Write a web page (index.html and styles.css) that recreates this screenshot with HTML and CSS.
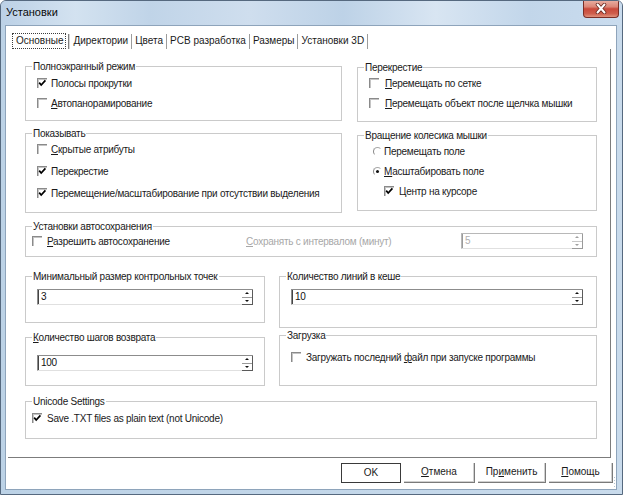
FILE: index.html
```html
<!DOCTYPE html>
<html>
<head>
<meta charset="utf-8">
<title>Установки</title>
<link rel="stylesheet" href="styles.css">
</head>
<body>
<div class="window">
  <div class="titlebar">
    <span class="title">Установки</span>
    <span class="close"><svg width="14" height="11" viewBox="0 0 14 11"><path d="M3.5 1.5 L10.5 9.5 M10.5 1.5 L3.5 9.5" stroke="#6a2a22" stroke-width="3.6" stroke-linecap="round"/><path d="M3.5 1.5 L10.5 9.5 M10.5 1.5 L3.5 9.5" stroke="#ffffff" stroke-width="2" stroke-linecap="round"/></svg></span>
  </div>
  <div class="frame">
    <div class="client">
      <div class="tabs">
        <span class="tab"><span class="focus">Основные</span></span>
        <span class="sep double"></span>
        <span class="tab">Директории</span><span class="sep"></span>
        <span class="tab">Цвета</span><span class="sep"></span>
        <span class="tab">PCB разработка</span><span class="sep"></span>
        <span class="tab">Размеры</span><span class="sep"></span>
        <span class="tab">Установки 3D</span><span class="sep"></span>
      </div>
      <div class="page">
        <div class="row row1">
          <div class="col col-left">
            <div class="group g1">
              <div class="glabel">Полноэкранный режим</div>
              <div class="gbody pl12">
                <div class="item h20"><span class="cb on"><svg width="10" height="10" viewBox="0 0 10 10"><path d="M2.2 4.6 L4.2 7 L8.4 2.4" fill="none" stroke="#000" stroke-width="1.7"/></svg></span>Полосы прокрутки</div>
                <div class="item h20"><span class="cb"></span><span><u>А</u>втопанорамирование</span></div>
              </div>
            </div>
            <div class="group g2">
              <div class="glabel">Показывать</div>
              <div class="gbody pl12 up2">
                <div class="item h22"><span class="cb"></span><span><u>С</u>крытые атрибуты</span></div>
                <div class="item h22"><span class="cb on"><svg width="10" height="10" viewBox="0 0 10 10"><path d="M2.2 4.6 L4.2 7 L8.4 2.4" fill="none" stroke="#000" stroke-width="1.7"/></svg></span>Перекрестие</div>
                <div class="item h22"><span class="cb on"><svg width="10" height="10" viewBox="0 0 10 10"><path d="M2.2 4.6 L4.2 7 L8.4 2.4" fill="none" stroke="#000" stroke-width="1.7"/></svg></span>Перемещение/масштабирование при отсутствии выделения</div>
              </div>
            </div>
          </div>
          <div class="col col-right">
            <div class="group g3">
              <div class="glabel">Перекрестие</div>
              <div class="gbody pl12 up1">
                <div class="item h20 wide"><span class="cb"></span><span><u>П</u>еремещать по сетке</span></div>
                <div class="item h20 wide"><span class="cb"></span><span><u>П</u>еремещать объект после щелчка мышки</span></div>
              </div>
            </div>
            <div class="group g4">
              <div class="glabel">Вращение колесика мышки</div>
              <div class="gbody pl16 up1">
                <div class="item h20"><span class="rb"></span>Перемещать поле</div>
                <div class="item h20"><span class="rb on"></span><span><u>М</u>асштабировать поле</span></div>
                <div class="item h20 sub"><span class="cb on"><svg width="10" height="10" viewBox="0 0 10 10"><path d="M2.2 4.6 L4.2 7 L8.4 2.4" fill="none" stroke="#000" stroke-width="1.7"/></svg></span>Центр на курсоре</div>
              </div>
            </div>
          </div>
        </div>

        <div class="group g5">
          <div class="glabel">Установки автосохранения</div>
          <div class="gbody autosave">
            <div class="item h16 mid"><span class="cb"></span><span><u>Р</u>азрешить автосохранение</span></div>
            <div class="item h16 disabled"><span><u>С</u>охранять с интервалом (минут)</span></div>
            <div class="edit disabled"><span class="val">5</span><span class="spin"><span><i class="up"></i></span><span><i class="down"></i></span></span></div>
          </div>
        </div>

        <div class="row row3">
          <div class="group g6">
            <div class="glabel">Минимальный размер контрольных точек</div>
            <div class="gbody ed">
              <div class="edit"><span class="val">3</span><span class="spin"><span><i class="up"></i></span><span><i class="down"></i></span></span></div>
            </div>
          </div>
          <div class="group g7">
            <div class="glabel">Количество линий в кеше</div>
            <div class="gbody ed ed-r">
              <div class="edit"><span class="val">10</span><span class="spin"><span><i class="up"></i></span><span><i class="down"></i></span></span></div>
            </div>
          </div>
        </div>

        <div class="row row4">
          <div class="group g8">
            <div class="glabel"><u>К</u>оличество шагов возврата</div>
            <div class="gbody ed ed-low">
              <div class="edit"><span class="val">100</span><span class="spin"><span><i class="up"></i></span><span><i class="down"></i></span></span></div>
            </div>
          </div>
          <div class="group g9">
            <div class="glabel">Загрузка</div>
            <div class="gbody pl12 load">
              <div class="item h16 mid"><span class="cb"></span><span>Загружать последний <u>ф</u>айл при запуске программы</span></div>
            </div>
          </div>
        </div>

        <div class="group g10">
          <div class="glabel">Unicode Settings</div>
          <div class="gbody uni">
            <div class="item h16 mid"><span class="cb on"><svg width="10" height="10" viewBox="0 0 10 10"><path d="M2.2 4.6 L4.2 7 L8.4 2.4" fill="none" stroke="#000" stroke-width="1.7"/></svg></span>Save .TXT files as plain text (not Unicode)</div>
          </div>
        </div>
      </div>
      <div class="buttons">
        <span class="btn default b-ok">OK</span>
        <span class="btn b-cancel"><u>О</u>тмена</span>
        <span class="btn b-apply">Пр<u>и</u>менить</span>
        <span class="btn b-help"><u>П</u>омощь</span>
      </div>
      <span class="grip"></span>
    </div>
  </div>
</div>
</body>
</html>
```
FILE: styles.css
```css
* { box-sizing: border-box; }
html, body { margin: 0; padding: 0; background: #fff; }
body {
  font-family: "Liberation Sans", Arial, sans-serif;
  font-size: 10px;
  color: #1a1a1a;
}
u { text-decoration: underline; text-underline-offset: 1px; }

.window {
  width: 623px;
  height: 495px;
  display: flex;
  flex-direction: column;
  background: #c3d6e9;
  position: relative;
  overflow: hidden;
  border: 1px solid #56697f;
  border-radius: 6px 6px 0 0;
}
.titlebar {
  height: 24px;
  flex: none;
  display: flex;
  justify-content: space-between;
  align-items: flex-start;
  padding-left: 5px;
  background: linear-gradient(90deg, #bcd1e6 0%, #d3e2f0 12%, #c0d4e8 24%, #cfdeee 40%, #bdd2e7 55%, #d8e5f2 70%, #c2d6ea 85%, #cadcee 100%);
}
.title {
  font-size: 11px;
  line-height: 23px;
  color: #0a0a0a;
}
.close {
  width: 36px;
  height: 18px;
  margin-right: 3px;
  margin-top: -1px;
  border: 1px solid #7a2e26;
  border-top: none;
  border-radius: 0 0 4px 4px;
  background: linear-gradient(#eab2a5 0%, #dc8677 40%, #c9493b 52%, #cf5e4c 80%, #e0927d 100%);
  display: flex;
  align-items: center;
  justify-content: center;
}
.frame {
  flex: 1;
  display: flex;
  padding: 0 5px 4px 4px;
  background: linear-gradient(90deg, #bcd2e6, #c9dbec);
}
.client {
  flex: 1;
  background: #fff;
  display: flex;
  flex-direction: column;
  border: 1px solid #8ea4bb;
  padding: 7px 3px 0 2px;
  position: relative;
}

/* tabs */
.tabs {
  height: 16px;
  display: flex;
  align-items: center;
  margin-left: 4px;
}
.tab {
  padding: 0 3px;
  line-height: 14px;
  white-space: nowrap;
}
.tab:first-child { padding: 0; }
.focus {
  display: block;
  border: 1px dotted #3c3c3c;
  padding: 0 2px 0 3px;
  line-height: 14px;
}
.sep {
  width: 1px;
  height: 15px;
  background: #9c9c9c;
}
.sep.double {
  width: 2px;
  margin: 0 0 0 2px;
  border-left: 1px solid #7e7e7e;
  background: #d6d6d6;
}

/* page */
.page {
  height: 409px;
  flex: none;
  margin-right: 2px;
  border-right: 1px solid #7c7c7c;
  border-bottom: 1px solid #7c7c7c;
  padding: 17px 13px 0 17px;
  letter-spacing: -0.25px;
}
.row { display: flex; }
.row1 { gap: 15px; }
.col { display: flex; flex-direction: column; }
.col-left { width: 317px; }
.col-right { width: 240px; }

.group {
  border: 1px solid #cacaca;
  background: #fff;
}
.glabel {
  height: 13px;
  line-height: 13px;
  margin: -7px 0 0 6px;
  padding: 0 1px;
  background: #fff;
  width: max-content;
  white-space: nowrap;
}
.gbody { display: flex; flex-direction: column; }
.pl12 { padding-left: 11px; }
.pl16 { padding-left: 15px; }
.up1 { margin-top: -1px; }
.up2 { margin-top: -2px; }

.g1 { height: 55px; }
.g2 { height: 80px; margin-top: 12px; }
.g3 { height: 55px; margin-top: 1px; }
.g4 { height: 76px; margin-top: 13px; }
.g5 { height: 31px; margin-top: 13px; }
.row3 { margin-top: 19px; gap: 14px; align-items: flex-start; }
.g6 { width: 240px; height: 47px; }
.g7 { flex: 1; height: 52px; }
.row4 { gap: 14px; align-items: flex-start; }
.g8 { width: 240px; height: 49px; margin-top: 9px; }
.g9 { flex: 1; height: 51px; margin-top: 7px; }
.g10 { height: 38px; margin-top: 15px; }

.item {
  display: flex;
  align-items: center;
  white-space: nowrap;
}
.h20 { height: 20px; }
.h22 { height: 22px; }
.h16 { height: 16px; }

.cb {
  width: 10px;
  height: 10px;
  flex: none;
  margin-right: 4px;
  border-top: 1px solid #8a8a8a;
  border-left: 1px solid #8a8a8a;
  box-shadow: inset 1px 1px 0 #c4c4c4;
  display: flex;
  align-items: center;
  justify-content: center;
  position: relative;
}
.cb svg { position: absolute; left: -1px; top: -1px; }
.wide .cb { margin-right: 6px; }
.sub { margin-left: 11px; }
.sub .cb { margin-right: 5px; }
.mid .cb { margin-right: 5px; }

.rb {
  width: 9px;
  height: 9px;
  flex: none;
  margin-right: 2px;
  border-radius: 50%;
  border: 1px solid transparent;
  border-left-color: #8a8a8a;
  border-top-color: #a8a8a8;
  position: relative;
}
.rb.on::after {
  content: "";
  position: absolute;
  left: 2px;
  top: 2px;
  width: 3px;
  height: 3px;
  border-radius: 50%;
  background: #111;
}

/* autosave row */
.autosave {
  display: grid;
  grid-template-columns: 214px 215px 122px;
  align-items: center;
  padding-left: 6px;
}
.disabled { color: #a8a8a8; }

/* edits */
.ed { padding: 0 11px; margin-top: 6px; }
.ed-r { padding-right: 13px; }
.ed-low { margin-top: 11px; }
.load { margin-top: 7px; }
.uni { margin-top: 2px; padding-left: 6px; }

.edit {
  height: 16px;
  display: flex;
  background: #fff;
  border-top: 1px solid #8c8c8c;
  border-left: 1px solid #8c8c8c;
  border-bottom: 1px solid #e0e0e0;
  box-shadow: inset 1px 0 0 #444;
}
.edit .val {
  flex: 1;
  padding-left: 3px;
  line-height: 14px;
  color: #111;
}
.spin {
  width: 11px;
  flex: none;
  display: flex;
  flex-direction: column;
  border-right: 1px solid #5a5a5a;
  border-bottom: 1px solid #5a5a5a;
  margin-bottom: -1px;
}
.spin > span {
  flex: 1;
  display: flex;
  align-items: center;
  justify-content: center;
}
.spin > span:first-child { border-bottom: 1px solid #9a9a9a; }
.spin i { width: 0; height: 0; display: block; border-left: 2px solid transparent; border-right: 2px solid transparent; }
.spin i.up { border-bottom: 2px solid #111; }
.spin i.down { border-top: 2px solid #111; }

.edit.disabled { border-top-color: #b8b8b8; border-left-color: #b8b8b8; box-shadow: inset 1px 0 0 #9a9a9a; }
.edit.disabled .val { color: #b0b0b0; }
.edit.disabled .spin { border-color: #9a9a9a; }
.edit.disabled .spin > span:first-child { border-bottom-color: #c8c8c8; }
.edit.disabled .spin i.up { border-bottom-color: #a0a0a0; }
.edit.disabled .spin i.down { border-top-color: #a0a0a0; }

/* buttons */
.buttons {
  display: flex;
  justify-content: flex-end;
  gap: 3px;
  padding-top: 5px;
}
.btn {
  height: 20px;
  line-height: 18px;
  text-align: center;
  border-right: 1px solid #7a7a7a;
  border-bottom: 1px solid #7a7a7a;
  box-shadow: inset -1px -1px 0 #d0d0d0;
}
.btn.default {
  border: 1px solid #3a3a3a;
  box-shadow: none;
}
.b-ok { width: 60px; }
.b-cancel { width: 71px; }
.b-apply { width: 68px; }
.b-help { width: 64px; }

.grip {
  position: absolute;
  right: -1px;
  bottom: 1px;
  width: 4px;
  height: 12px;
  background: radial-gradient(circle, #b4c4d2 0.8px, transparent 1px) 0 0 / 3px 3px;
}
```
